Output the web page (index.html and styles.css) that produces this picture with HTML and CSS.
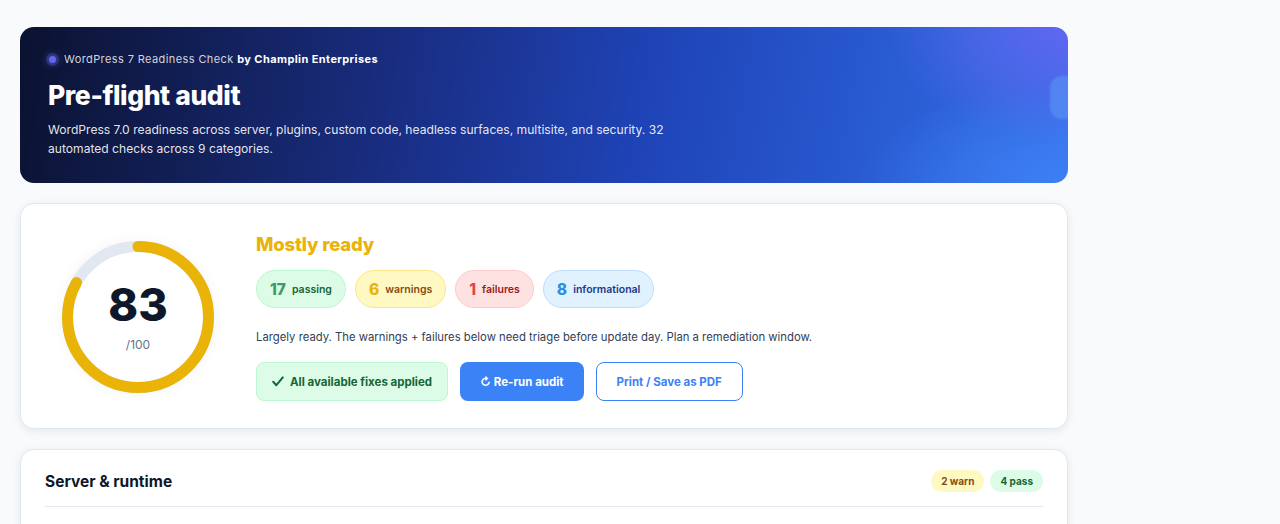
FILE: index.html
```html
<!DOCTYPE html>
<html lang="en">
<head>
    <meta charset="UTF-8">
    <meta name="viewport" content="width=device-width, initial-scale=1.0">
    <title>WordPress 7 Readiness Check - Pre-flight audit</title>
    <link rel="stylesheet" href="styles.css">
</head>
<body>
    <div class="wrap">
        <header class="hero">
            <div class="hero-eyebrow">
                <span class="hero-dot"></span>
                <span>WordPress 7 Readiness Check <strong>by Champlin Enterprises</strong></span>
            </div>
            <h1>Pre-flight audit</h1>
            <p>WordPress 7.0 readiness across server, plugins, custom code, headless surfaces, multisite, and security. 32 automated checks across 9 categories.</p>
            <span class="hero-glow"></span>
        </header>

        <section class="card summary">
            <div class="score">
                <svg width="152" height="152" viewBox="0 0 152 152">
                    <circle cx="76" cy="76" r="70.5" fill="none" stroke="#e2e8f0" stroke-width="11"/>
                    <circle cx="76" cy="76" r="70.5" fill="none" stroke="#eab308" stroke-width="11"
                            stroke-linecap="round" stroke-dasharray="367.7 443" transform="rotate(-90 76 76)"/>
                </svg>
                <div class="score-text">
                    <div class="score-value">83</div>
                    <div class="score-max">/100</div>
                </div>
            </div>

            <div class="summary-body">
                <h2 class="verdict">Mostly ready</h2>
                <div class="pills">
                    <span class="pill pill-pass"><b>17</b> passing</span>
                    <span class="pill pill-warn"><b>6</b> warnings</span>
                    <span class="pill pill-fail"><b>1</b> failures</span>
                    <span class="pill pill-info"><b>8</b> informational</span>
                </div>
                <p class="summary-note">Largely ready. The warnings + failures below need triage before update day. Plan a remediation window.</p>
                <div class="actions">
                    <span class="button button-done">
                        <svg width="12" height="11" viewBox="0 0 12 11"><path d="M1.2 5.8 L4.4 9.2 L10.8 1.4" fill="none" stroke="currentColor" stroke-width="2" stroke-linecap="round" stroke-linejoin="round"/></svg>
                        All available fixes applied
                    </span>
                    <button class="button button-primary">&#8635; Re-run audit</button>
                    <button class="button button-outline">Print / Save as PDF</button>
                </div>
            </div>
        </section>

        <section class="card category">
            <div class="category-header">
                <h3>Server &amp; runtime</h3>
                <div class="badges">
                    <span class="badge badge-warn">2 warn</span>
                    <span class="badge badge-pass">4 pass</span>
                </div>
            </div>
        </section>
    </div>
</body>
</html>
```

FILE: styles.css
```css
* {
    box-sizing: border-box;
    margin: 0;
    padding: 0;
}

body {
    background-color: #f8fafc;
    font-family: Inter, 'Noto Sans', sans-serif;
    color: #0f172a;
    padding: 27px 20px 0;
}

.wrap {
    width: 1048px;
    display: flex;
    flex-direction: column;
    gap: 20px;
}

/* Hero banner */
.hero {
    position: relative;
    overflow: hidden;
    height: 156px;
    padding: 25px 28px;
    border-radius: 14px;
    color: #fff;
    background:
        radial-gradient(ellipse 260px 160px at 100% 0%, rgba(99, 102, 241, 0.9), rgba(99, 102, 241, 0) 70%),
        radial-gradient(ellipse 300px 140px at 100% 100%, rgba(59, 130, 246, 0.9), rgba(59, 130, 246, 0) 70%),
        linear-gradient(100deg, #0b1230 0%, #1a2f86 38%, #1f44b8 60%, #2b5fd6 85%, #3b6fe8 100%);
}

.hero-eyebrow {
    display: flex;
    align-items: center;
    gap: 8px;
    font-size: 11px;
    letter-spacing: 0.4px;
    color: rgba(255, 255, 255, 0.82);
}

.hero-eyebrow strong {
    color: #fff;
    font-weight: 700;
}

.hero-dot {
    width: 7px;
    height: 7px;
    border-radius: 50%;
    background-color: #6366f1;
    box-shadow: 0 0 0 3px rgba(99, 102, 241, 0.25), 0 0 8px rgba(129, 140, 248, 0.8);
    margin-left: 1px;
}

.hero h1 {
    font-size: 26.5px;
    font-weight: 800;
    letter-spacing: -0.4px;
    margin-top: 13px;
    line-height: 1.25;
}

.hero p {
    max-width: 640px;
    font-size: 12.1px;
    line-height: 19px;
    margin-top: 8px;
    color: rgba(255, 255, 255, 0.9);
}

.hero-glow {
    position: absolute;
    right: -8px;
    top: 49px;
    width: 26px;
    height: 43px;
    border-radius: 12px;
    background-color: rgba(96, 165, 250, 0.45);
    filter: blur(1px);
}

/* Cards */
.card {
    background-color: #fff;
    border: 1px solid #e2e8f0;
    border-radius: 14px;
    box-shadow: 0 2px 8px rgba(15, 23, 42, 0.08);
}

.summary {
    display: flex;
    align-items: center;
    gap: 42px;
    padding: 29px 41px 27px;
}

.score {
    position: relative;
    width: 152px;
    height: 152px;
    flex-shrink: 0;
    border-radius: 50%;
    box-shadow: 0 0 14px rgba(15, 23, 42, 0.05);
}

.score svg {
    display: block;
}

.score-text {
    position: absolute;
    inset: 0;
    display: flex;
    flex-direction: column;
    align-items: center;
    justify-content: center;
}

.score-value {
    font-size: 45px;
    font-weight: 800;
    line-height: 1;
    color: #0f172a;
}

.score-max {
    font-size: 12px;
    color: #64748b;
    margin-top: 10px;
}

.verdict {
    font-size: 18.5px;
    font-weight: 800;
    color: #eab308;
    letter-spacing: -0.2px;
}

.pills {
    display: flex;
    gap: 9px;
    margin-top: 15px;
}

.pill {
    display: inline-flex;
    align-items: center;
    gap: 6px;
    height: 38px;
    padding: 0 13px;
    border-radius: 19px;
    border: 1px solid;
    font-size: 10.5px;
    font-weight: 600;
}

.pill b {
    font-size: 15.5px;
    font-weight: 800;
}

.pill-pass { background-color: #dcfce7; border-color: #bbf7d0; color: #166534; }
.pill-pass b { color: #3f9a63; }
.pill-warn { background-color: #fef9c3; border-color: #fde68a; color: #854d0e; }
.pill-warn b { color: #eab308; }
.pill-fail { background-color: #fee2e2; border-color: #fecaca; color: #991b1b; }
.pill-fail b { color: #dc4848; }
.pill-info { background-color: #e0f2fe; border-color: #bfdbfe; color: #1e3a8a; }
.pill-info b { color: #2b8fe8; }

.summary-note {
    font-size: 11.3px;
    color: #334155;
    margin-top: 22px;
}

.actions {
    display: flex;
    gap: 12px;
    margin-top: 18px;
}

.button {
    display: inline-flex;
    align-items: center;
    justify-content: center;
    height: 39px;
    padding: 0 15px;
    border-radius: 8px;
    border: 1px solid transparent;
    font-family: inherit;
    font-size: 11.5px;
    font-weight: 700;
    cursor: pointer;
}

.button-done {
    background-color: #dcfce7;
    border-color: #bbf7d0;
    color: #166534;
    gap: 6px;
}

.button-primary {
    background-color: #3b82f6;
    color: #fff;
    padding: 0 19px;
}

.button-outline {
    background-color: #fff;
    border-color: #3b82f6;
    color: #3b82f6;
    padding: 0 20px;
}

/* Category section */
.category {
    padding: 20px 24px 0;
    height: 120px;
}

.category-header {
    display: flex;
    justify-content: space-between;
    align-items: center;
    padding-bottom: 14px;
    border-bottom: 1px solid #e2e8f0;
}

.category-header h3 {
    font-size: 15.5px;
    font-weight: 700;
    color: #0f172a;
}

.badges {
    display: flex;
    gap: 6px;
}

.badge {
    display: inline-flex;
    align-items: center;
    height: 22px;
    padding: 0 10px;
    border-radius: 11px;
    font-size: 10px;
    font-weight: 700;
}

.badge-warn { background-color: #fef9c3; color: #854d0e; }
.badge-pass { background-color: #dcfce7; color: #166534; }
```
